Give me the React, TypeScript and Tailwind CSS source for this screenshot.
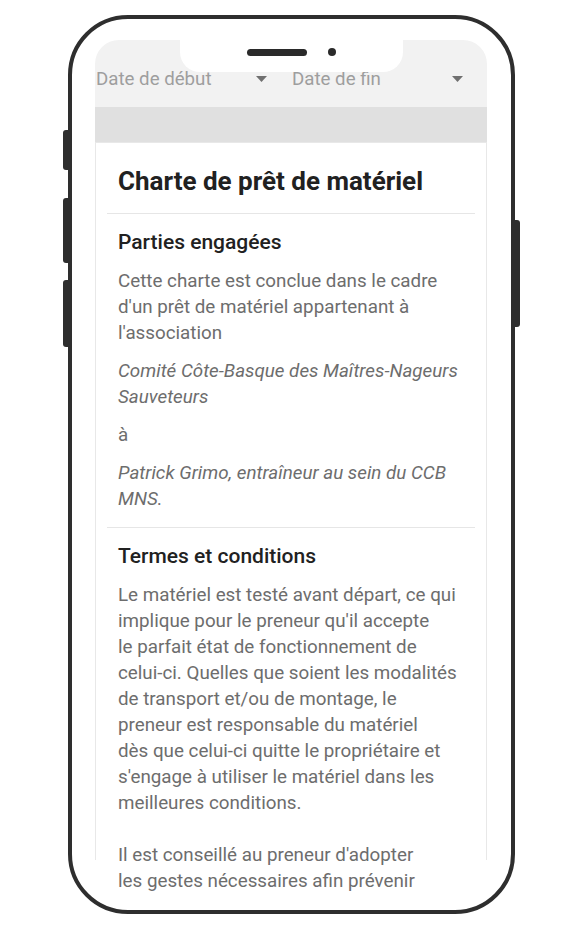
import { ReactNode } from "react"

const font = { fontFamily: "Roboto, 'Noto Sans', Arial, sans-serif" }

const Caret = () => (
  <svg width="11" height="6" viewBox="0 0 11 6" className="shrink-0">
    <path d="M0 0 L11 0 L5.5 6 Z" fill="#707070" />
  </svg>
)

const DateSelect = ({ label }: { label: string }) => (
  <div className="flex h-[24px] w-[176px] items-center justify-between pr-[5px]">
    <span className="text-[18.7px] leading-[24px] text-[#9e9e9e]">{label}</span>
    <Caret />
  </div>
)

const Para = ({ children, italic }: { children: ReactNode; italic?: boolean }) => (
  <p
    className={`mt-[12px] text-[18.8px] leading-[26px] text-[#6d6d6d] first:mt-0 ${
      italic ? "italic" : ""
    }`}
  >
    {children}
  </p>
)

const Section = ({
  title,
  children,
  last,
}: {
  title: string
  children: ReactNode
  last?: boolean
}) => (
  <section
    className={`px-[11px] pt-[15px] ${last ? "" : "border-b border-[#e6e6e6] pb-[15px]"}`}
  >
    <h2 className="mb-[13px] text-[21px] font-medium leading-[26px] text-[#212121]">
      {title}
    </h2>
    <div>{children}</div>
  </section>
)

export default function App() {
  return (
    <div className="min-h-[934px] w-[582px] bg-white pl-[68px] pt-[15px]" style={font}>
      <div className="relative h-[899px] w-[447px] rounded-[60px] border-[4px] border-[#2e2e2e]">
        {/* side buttons */}
        <div className="absolute left-[-9px] top-[111px] h-[40px] w-[5px] rounded-l-[3px] bg-[#2e2e2e]" />
        <div className="absolute left-[-9px] top-[179px] h-[65px] w-[5px] rounded-l-[3px] bg-[#2e2e2e]" />
        <div className="absolute left-[-9px] top-[261px] h-[67px] w-[5px] rounded-l-[3px] bg-[#2e2e2e]" />
        <div className="absolute right-[-9px] top-[201px] h-[107px] w-[5px] rounded-r-[3px] bg-[#2e2e2e]" />

        <div className="h-full overflow-hidden rounded-[56px] pl-[23px] pr-[24px] pt-[21px]">
          <div className="h-[855px] overflow-hidden rounded-t-[24px] bg-white">
            <div className="flex h-[67px] items-start gap-[20px] bg-[#f2f2f2] pl-[1px] pt-[27px]">
              <DateSelect label="Date de début" />
              <DateSelect label="Date de fin" />
            </div>
            <div className="h-[35px] bg-[#e0e0e0]" />
            <div className="h-[718px] border-x border-t border-[#e8e8e8] px-[11px] pt-[23px]">
              <h1 className="px-[11px] text-[26px] font-bold leading-[30px] text-[#212121]">
                Charte de prêt de matériel
              </h1>
              <div className="mt-[17px] border-b border-[#e6e6e6]" />
              <Section title="Parties engagées">
                <Para>
                  Cette charte est conclue dans le cadre
                  <br />
                  d'un prêt de matériel appartenant à
                  <br />
                  l'association
                </Para>
                <Para italic>
                  Comité Côte-Basque des Maîtres-Nageurs
                  <br />
                  Sauveteurs
                </Para>
                <Para>à</Para>
                <Para italic>
                  Patrick Grimo, entraîneur au sein du CCB
                  <br />
                  MNS.
                </Para>
              </Section>
              <Section title="Termes et conditions" last>
                <Para>
                  Le matériel est testé avant départ, ce qui
                  <br />
                  implique pour le preneur qu'il accepte
                  <br />
                  le parfait état de fonctionnement de
                  <br />
                  celui-ci. Quelles que soient les modalités
                  <br />
                  de transport et/ou de montage, le
                  <br />
                  preneur est responsable du matériel
                  <br />
                  dès que celui-ci quitte le propriétaire et
                  <br />
                  s'engage à utiliser le matériel dans les
                  <br />
                  meilleures conditions.
                  <br />
                  <br />
                  Il est conseillé au preneur d'adopter
                  <br />
                  les gestes nécessaires afin prévenir
                </Para>
              </Section>
            </div>
          </div>
        </div>

        {/* notch */}
        <div className="absolute left-[108px] top-0 flex h-[53px] w-[223px] items-center justify-center gap-[21px] rounded-b-[20px] bg-white pt-[13px]">
          <div className="h-[7px] w-[60px] rounded-full bg-[#2a2a2a]" />
          <div className="h-[8px] w-[8px] rounded-full bg-[#2a2a2a]" />
        </div>
      </div>
    </div>
  )
}
